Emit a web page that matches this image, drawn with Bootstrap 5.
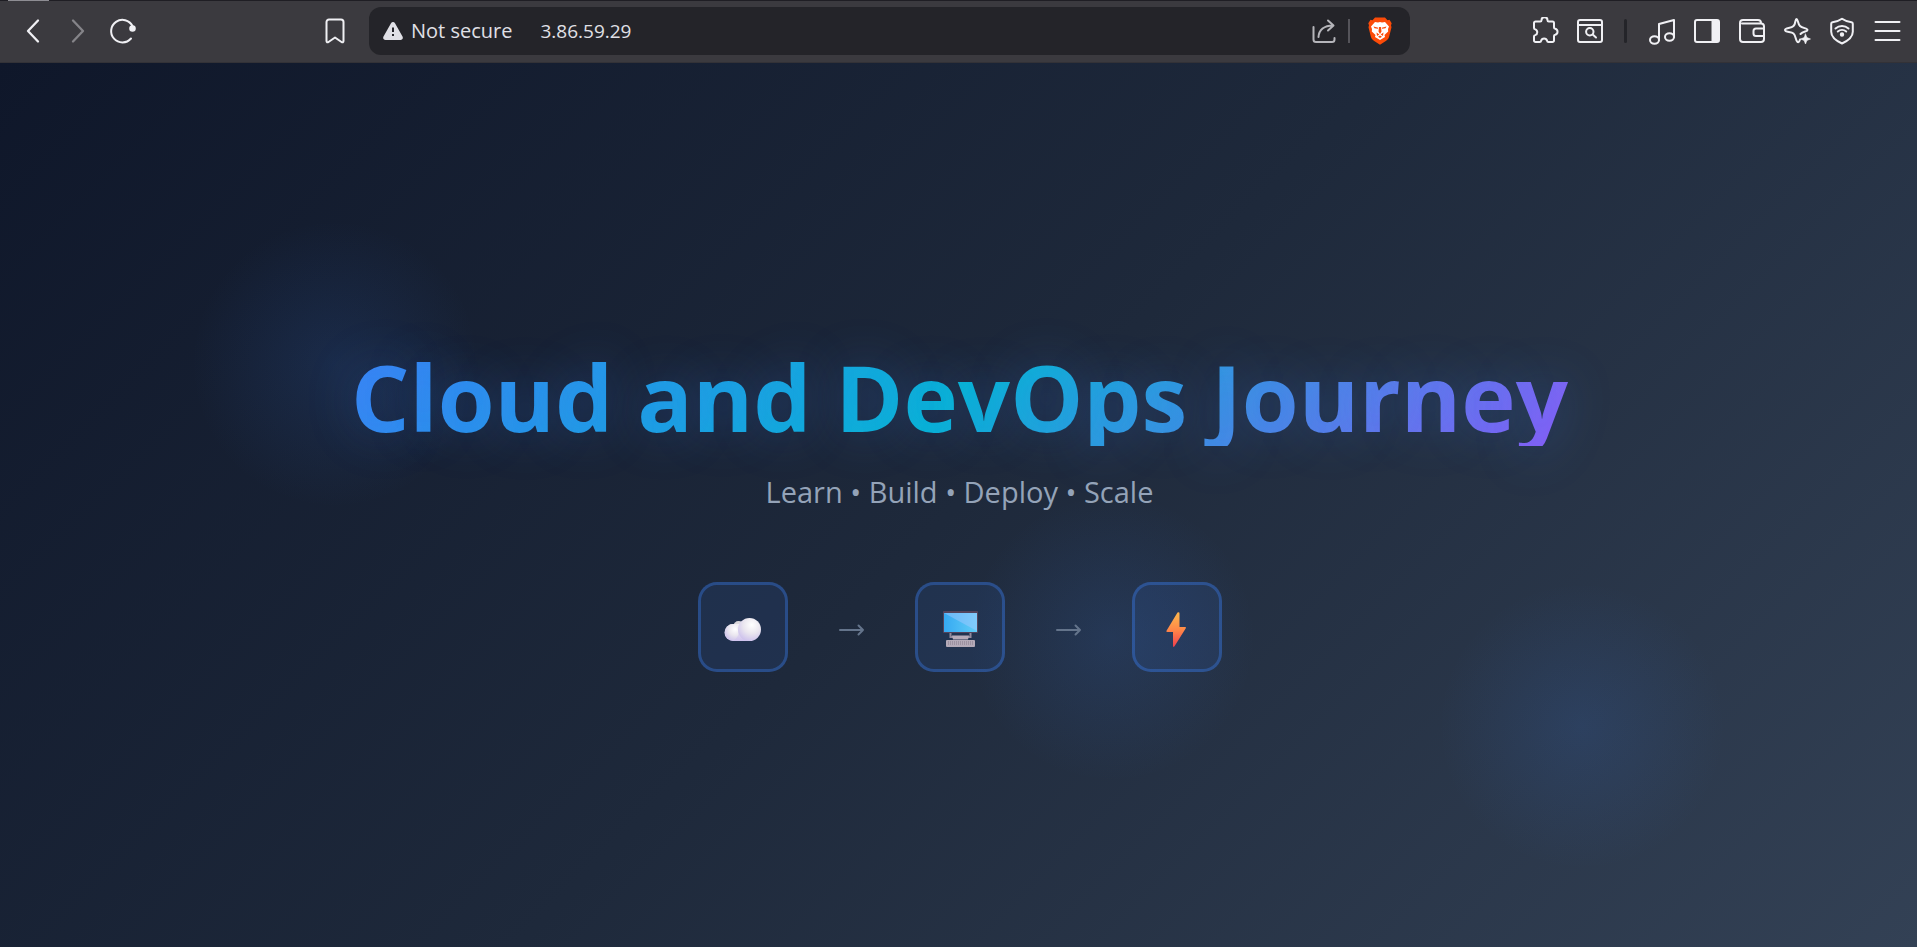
<!DOCTYPE html>
<html lang="en">
<head>
<meta charset="utf-8">
<meta name="viewport" content="width=device-width, initial-scale=1">
<title>Cloud and DevOps Journey</title>
<link href="https://cdn.jsdelivr.net/npm/bootstrap@5.3.0/dist/css/bootstrap.min.css" rel="stylesheet">
<style>
  body { font-family: "Open Sans", "Noto Sans", sans-serif; background: #0f172a; }
  svg { display: block; flex: none; }

  /* Browser toolbar */
  .browser-bar {
    display: grid;
    grid-template-columns: 19.25% minmax(0, 1fr) 26.45%;
    padding: 6px 0 7px;
    background: #3b3a3f;
    border-top: 1px solid #1f1e24;
    border-bottom: 1px solid #333237;
    color: #f0f0f4;
  }
  .tab-edge { left: 8px; top: -1px; width: 41px; height: 1px; background: #8e8d93; }
  .nav-tools { padding: 0 12px 0 10px; }
  .tool {
    width: 45px; height: 48px; padding: 0; border: 0; background: none; color: inherit;
    display: flex; align-items: center; justify-content: center;
  }
  .tool svg, .line-icon { fill: none; stroke: currentColor; stroke-width: 2; stroke-linecap: round; stroke-linejoin: round; }
  .tool:disabled { color: #858489; }
  .tool-split { width: 3px; height: 24px; border-radius: 2px; background: #242429; margin: 0 12px; }
  .address { height: 48px; border-radius: 12px; background: #242429; color: #e0e0e6; font-size: 20px; padding-left: 14px; }
  .address .btn-security { color: inherit; font-size: inherit; line-height: 24px; }
  .address input { color: inherit; font-size: 19px; background: none; border: 0; outline: 0; padding: 0; margin-left: 28px; min-width: 0; line-height: 24px; }
  .address .rule { width: 2px; height: 24px; background: #55545a; }
  .address .share { width: 48px; color: #b5b5ba; }
  .address .shields { width: 60px; }
  .address .shields svg { stroke: none; }

  /* Landing page */
  .hero { background: linear-gradient(135deg, #0f172a 0%, #1e293b 50%, #334155 100%); overflow: hidden; padding: 2px 0 0 2px; }
  .orb {
    width: 290px; height: 290px; border-radius: 50%; transform: translate(-50%, -50%);
    background: radial-gradient(circle, rgba(59, 130, 246, .12) 0%, rgba(59, 130, 246, 0) 70%);
  }
  .orb-a { left: 17.5%; top: 34%; }
  .orb-b { left: 58%; top: 65%; }
  .orb-c { left: 82.5%; top: 75%; }
  .hero-title {
    font-size: 92px; line-height: 98px; font-weight: 700; padding-top: 8px; margin: 0 0 26px;
    background: linear-gradient(135deg, #3b82f6, #06b6d4 50%, #8b5cf6);
    -webkit-background-clip: text; background-clip: text; color: transparent;
    text-shadow: 0 0 50px rgba(59, 130, 246, .3);
  }
  .tagline { font-size: 29px; line-height: 40px; color: #94a3b8; margin: 0 0 70px; }
  .stage {
    width: 90px; height: 90px; border: 3px solid rgba(59, 130, 246, .35); border-radius: 19px;
    background: rgba(59, 130, 246, .1);
    display: flex; align-items: center; justify-content: center;
  }
  .arrow { width: 127px; color: #64748b; display: flex; justify-content: center; padding: 6px 0 0 2px; }
</style>
</head>
<body class="d-flex flex-column min-vh-100">

<header class="browser-bar position-relative align-items-center">
  <span class="tab-edge position-absolute"></span>
  <nav class="nav-tools d-flex align-items-center" aria-label="Navigation">
    <button class="tool" aria-label="Back"><svg width="28" height="28" viewBox="0 0 28 28"><path d="M19 3.5 9 14l10 10.5" stroke-width="2.3"/></svg></button>
    <button class="tool" aria-label="Forward" disabled><svg width="28" height="28" viewBox="0 0 28 28"><path d="m9 3.500 10 10.500-10 10.500" stroke-width="2.3"/></svg></button>
    <button class="tool" aria-label="Reload"><svg width="28" height="28" viewBox="0 0 28 28"><path d="M23.500 9A11.300 11.300 0 1 0 22 21.500"/><circle cx="23.500" cy="11.500" r="2.300" fill="currentColor"/></svg></button>
    <button class="tool ms-auto" aria-label="Bookmark"><svg width="28" height="28" viewBox="0 0 28 28"><path d="M8 2.500h12a2.500 2.500 0 0 1 2.500 2.500v19c0 1.300-1 1.700-2 1L14 20.500 7.500 25c-1 .7-2 .3-2-1V5A2.500 2.500 0 0 1 8 2.500Z"/></svg></button>
  </nav>

  <div class="address d-flex align-items-center">
    <button class="btn-security border-0 bg-transparent p-0 d-flex align-items-center gap-2">
      <svg width="20" height="18" viewBox="0 0 20 18"><path d="M8 1.300c.9-1.600 3.100-1.600 4 0l7.500 13.200c.9 1.600-.2 3.500-2 3.500h-15c-1.800 0-2.900-1.900-2-3.500Z" fill="currentColor"/><path d="M10 5.500v4.500m0 2v2" stroke="#242429" stroke-width="2"/></svg>
      <span>Not secure</span>
    </button>
    <input class="flex-grow-1" type="text" value="3.86.59.29" aria-label="Address">
    <button class="tool share" aria-label="Share"><svg width="28" height="28" viewBox="0 0 28 28"><path d="M3.500 10v12.500a2.500 2.500 0 0 0 2.500 2.500h16a2.500 2.500 0 0 0 2.500-2.500V21M8.500 20C9 13 14 8.500 23 8.500M18 3.500l5.500 5-5.500 5"/></svg></button>
    <span class="rule"></span>
    <button class="tool shields" aria-label="Shields"><svg width="24" height="28" viewBox="0 0 24 28"><path d="M7 .5h10l2.500 2.700 2-.4 2.200 3.500-.7 2 .5 2-2.300 9.200c-.5 2-1.500 3-3 4.200L12 27.800l-6.200-4.100c-1.500-1.200-2.500-2.200-3-4.200L.5 10.300l.5-2-.7-2 2.200-3.500 2 .4Z" fill="#fb4b08"/><path d="m7 5 3 .6 2-.6 2 .6 3-.6 4 4.500-1 2.500.2 2.500-3.700 3.500.5 2-5 3-5-3 .5-2L3.800 14.500 4 12 3 9.500Z" fill="#fff"/><path d="m5.500 9.500 4.800 1.300-.5 1-3.300-.6Zm13 0-4.800 1.300.5 1 3.300-.6ZM11 10h2l.5 4.500L12 17l-1.500-2.500ZM8.500 15.500l2.800 2L9 19Zm7 0-2.800 2L15 19ZM12 18.500l2 1.300-2 1.200-2-1.200Z" fill="#fb4b08"/></svg></button>
  </div>

  <nav class="d-flex align-items-center justify-content-end pe-2" aria-label="Browser tools">
    <button class="tool" aria-label="Extensions"><svg width="28" height="28" viewBox="0 0 28 28"><path d="M4.500 4.500h4.700c1 0 1.300-.5 1.300-1.300a3 3 0 0 1 6 0c0 .8.400 1.300 1.300 1.300h3.700a1.500 1.500 0 0 1 1.500 1.500v4.500c0 .9.500 1.200 1.200 1.300a3.100 3.100 0 0 1 0 6c-.7.100-1.200.4-1.200 1.300v4.400A1.500 1.500 0 0 1 21.500 25h-4c-.9 0-1.300-.4-1.400-1.200a3.100 3.100 0 0 0-6 0c-.1.800-.5 1.200-1.400 1.200H4.500A1.500 1.500 0 0 1 3 23.500v-4c0-.9.500-1.200 1.200-1.400a3 3 0 0 0 0-5.700C3.500 12.200 3 11.900 3 11V6a1.500 1.500 0 0 1 1.500-1.500Z"/></svg></button>
    <button class="tool" aria-label="Search page"><svg width="28" height="28" viewBox="0 0 28 28"><rect x="2" y="3" width="24" height="22" rx="2"/><path d="M2 8h24m-9 9.800 3 2.700"/><circle cx="13.800" cy="14.800" r="3.700"/></svg></button>
    <span class="tool-split"></span>
    <button class="tool" aria-label="Playlist"><svg width="28" height="28" viewBox="0 0 28 28"><ellipse cx="6.500" cy="23" rx="4.500" ry="3.700"/><ellipse cx="21.500" cy="20" rx="4.500" ry="3.700"/><path d="M11 23V7l15-4v17"/></svg></button>
    <button class="tool" aria-label="Sidebar"><svg width="28" height="28" viewBox="0 0 28 28"><rect x="2" y="3" width="24" height="22" rx="2"/><path d="M19.500 4H25v20h-5.500Z" fill="currentColor"/></svg></button>
    <button class="tool" aria-label="Wallet"><svg width="28" height="28" viewBox="0 0 28 28"><path d="M23 6.500V6a3 3 0 0 0-3-3H5a3 3 0 0 0-3 3v16a3 3 0 0 0 3 3h18a3 3 0 0 0 3-3V9.500a3 3 0 0 0-3-3H4M26 11.500h-8a2.500 2.500 0 0 0-2.500 2.500v2.500A2.500 2.500 0 0 0 18 19h8"/></svg></button>
    <button class="tool" aria-label="Leo AI"><svg width="28" height="28" viewBox="0 0 28 28"><path d="M17 22.500c-1 3-1.800 3-2.500 2.500-2-1-1.500-6.500-4-8.500S2 15.500 2 13s6-1.500 8.500-4S12 2 13.500 2s1 4.500 3.500 7 7.500 2 7.500 4-4.500 1-7 4"/><path d="m22.500 17 1.400 3.600 3.600 1.400-3.600 1.400-1.400 3.600-1.400-3.600-3.600-1.400 3.600-1.400Z" fill="currentColor" stroke-width=".6"/></svg></button>
    <button class="tool" aria-label="VPN"><svg width="28" height="28" viewBox="0 0 28 28"><path d="M14 1.800c3 2.200 6.500 3 9.500 3.400.8.100 1.300.8 1.300 1.600v8c0 5-5.300 9.200-10.800 11.700C8.500 24 3.200 19.800 3.200 14.800v-8c0-.8.500-1.500 1.300-1.600C7.500 4.800 11 4 14 1.800Z"/><path d="M7.500 11.500c3.700-3.300 9.300-3.300 13 0M9.800 14.500c2.400-2 6-2 8.400 0"/><circle cx="14" cy="17.500" r="1.200" fill="currentColor"/></svg></button>
    <button class="tool" aria-label="Menu"><svg width="28" height="28" viewBox="0 0 28 28"><path d="M2.500 5h24m-24 9h24m-24 9h24"/></svg></button>
  </nav>
</header>

<main class="hero position-relative flex-grow-1 d-flex flex-column align-items-center justify-content-center text-center">
  <span class="orb orb-a position-absolute"></span>
  <span class="orb orb-b position-absolute"></span>
  <span class="orb orb-c position-absolute"></span>

  <h1 class="hero-title position-relative">Cloud and DevOps Journey</h1>
  <p class="tagline position-relative">Learn • Build • Deploy • Scale</p>

  <div class="d-flex align-items-center position-relative">
    <div class="stage">
      <svg width="40" height="40" viewBox="0 0 40 40" role="img" aria-label="Cloud">
        <defs>
          <linearGradient id="cloudBase" x1="0" y1="0" x2="0" y2="1"><stop offset="0" stop-color="#f2f0f2"/><stop offset="1" stop-color="#cfc2ee"/></linearGradient>
          <radialGradient id="puffA" cx=".6" cy=".3" r=".75"><stop offset="0" stop-color="#fff"/><stop offset=".5" stop-color="#eae6ef"/><stop offset="1" stop-color="#cbbfec"/></radialGradient>
        </defs>
        <circle cx="15.500" cy="19" r="5" fill="#dcd8dc"/>
        <path d="M10 17h18v17H10a8.500 8.500 0 0 1 0-17Z" fill="url(#cloudBase)"/>
        <circle cx="10.500" cy="25.500" r="8.500" fill="url(#puffA)"/>
        <path d="M14 20h12v14H10c5-3 7-7 4-14Z" fill="url(#cloudBase)"/>
        <circle cx="26.500" cy="22.500" r="11.500" fill="url(#puffA)"/>
      </svg>
    </div>
    <div class="arrow"><svg class="line-icon" width="26" height="12" viewBox="0 0 26 12"><path d="M1 6h23M19.500 1.500 24 6l-4.500 4.500"/></svg></div>
    <div class="stage">
      <svg width="40" height="40" viewBox="0 0 40 40" role="img" aria-label="Desktop computer">
        <defs><linearGradient id="screen" x1="0" y1="0" x2="1" y2="0"><stop offset="0" stop-color="#36a9f2"/><stop offset="1" stop-color="#61cdf6"/></linearGradient></defs>
        <rect x="3" y="4" width="35" height="22" rx="1" fill="#54445c"/>
        <rect x="4" y="6" width="33" height="19" fill="url(#screen)"/>
        <path d="M4 6h33v18Z" fill="#a0c8ff" opacity=".5"/>
        <path d="M10.500 26v4h3m17-4v4h-3" fill="none" stroke="#91899b" stroke-width="2"/>
        <path d="M12 28.500h17l-1 4H13Z" fill="#b7abb9"/>
        <rect x="6" y="33" width="29" height="7" rx="1" fill="#b4aab8"/>
        <path d="M8 35h25M8 37h25" stroke="#857b8b" stroke-dasharray="1 1"/>
      </svg>
    </div>
    <div class="arrow"><svg class="line-icon" width="26" height="12" viewBox="0 0 26 12"><path d="M1 6h23M19.500 1.500 24 6l-4.500 4.500"/></svg></div>
    <div class="stage">
      <svg width="40" height="40" viewBox="0 0 40 40" role="img" aria-label="Lightning bolt">
        <defs><linearGradient id="bolt" x1="0" y1="0" x2="0" y2="1"><stop offset=".1" stop-color="#fdb04c"/><stop offset=".5" stop-color="#ff8847"/><stop offset="1" stop-color="#f0404f"/></linearGradient></defs>
        <path d="M20.500 5.500q2-1 2 1V20H28q1.500 0 .8 1.300L17.500 39.300q-1.500 1.500-1.500-.8V25h-5.500q-1.700 0-1-1.300Z" fill="url(#bolt)"/>
      </svg>
    </div>
  </div>
</main>

<script src="https://cdn.jsdelivr.net/npm/bootstrap@5.3.0/dist/js/bootstrap.bundle.min.js"></script>
</body>
</html>
